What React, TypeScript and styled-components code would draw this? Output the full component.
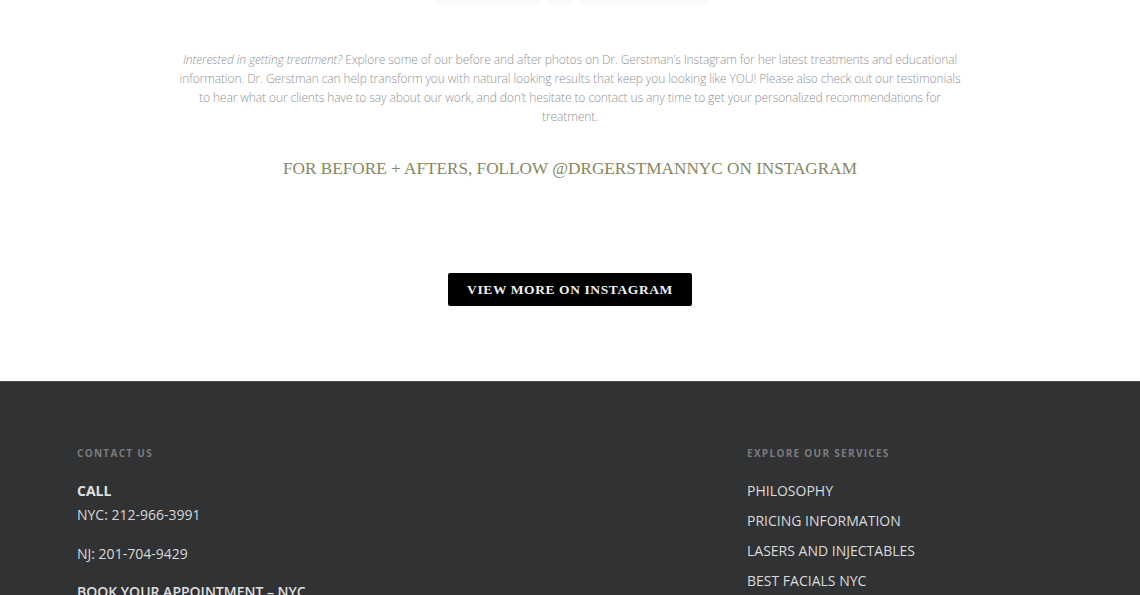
import React from "react";
import styled, { createGlobalStyle } from "styled-components";

const Global = createGlobalStyle`
  html, body { margin: 0; padding: 0; background: #fff; }
  body { font-family: "Open Sans", "Liberation Sans", sans-serif; overflow: hidden; }
  * { box-sizing: border-box; }
`;

const Page = styled.div`
  width: 1140px;
  height: 595px;
  overflow: hidden;
  display: flex;
  flex-direction: column;
`;

const TopStrip = styled.div`
  display: flex;
  flex-shrink: 0;
  justify-content: center;
  gap: 8px;
  height: 5px;
  padding-left: 1px;
`;

const Ghost = styled.div<{ $w: number }>`
  width: ${(p) => p.$w}px;
  height: 5px;
  background: #fafafa;
`;

const Intro = styled.section`
  display: flex;
  flex-shrink: 0;
  flex-direction: column;
  align-items: center;
  padding-top: 45px;
  height: 376px;
`;

const Para = styled.p`
  margin: 0;
  width: 790px;
  text-align: center;
  font-family: "Open Sans", sans-serif;
  font-weight: 300;
  font-size: 12px;
  line-height: 19px;
  color: #939393;
  letter-spacing: -0.1px;
  em { font-style: italic; }
`;

const Follow = styled.h2`
  margin: 33px 0 0;
  font-family: "Liberation Serif", "DejaVu Serif", serif;
  font-weight: 400;
  font-size: 17.2px;
  letter-spacing: 0;
  color: #888760;
  text-transform: uppercase;
`;

const Button = styled.a`
  margin-top: 94px;
  width: 244px;
  height: 33px;
  display: flex;
  align-items: center;
  justify-content: center;
  background: #000;
  border-radius: 2px;
  color: #f1f1f1;
  font-family: "Liberation Serif", serif;
  font-weight: 700;
  font-size: 13.5px;
  letter-spacing: 0.6px;
  text-decoration: none;
`;

const Footer = styled.footer`
  flex: 1;
  background: #313234;
  border-top: 1px solid #4a4b4d;
  display: grid;
  grid-template-columns: 670px 1fr;
  padding: 64px 0 0 77px;
`;

const Col = styled.div`
  display: flex;
  flex-direction: column;
`;

const ColTitle = styled.h4`
  margin: 0 0 19px;
  font-family: "Open Sans", sans-serif;
  font-weight: 700;
  font-size: 10px;
  letter-spacing: 1.3px;
  color: #7c7c7e;
  line-height: 14px;
`;

const Label = styled.div`
  font-family: "Open Sans", sans-serif;
  font-weight: 700;
  font-size: 14px;
  line-height: 24px;
  color: #e0e0e0;
`;

const Line = styled.div<{ $gap?: number }>`
  font-family: "Open Sans", sans-serif;
  font-size: 14px;
  line-height: 24px;
  color: #d8d8d8;
  margin-top: ${(p) => p.$gap ?? 0}px;
`;

const BookLine = styled(Label)`
  margin-top: 14px;
  font-weight: 600;
`;

const NavList = styled.nav`
  display: flex;
  flex-direction: column;
  margin-top: -3px;
`;

const NavLink = styled.a`
  font-family: "Open Sans", sans-serif;
  font-size: 14px;
  line-height: 30px;
  color: #dadada;
  text-decoration: none;
`;

export default function App() {
  return (
    <Page>
      <Global />
      <TopStrip>
        <Ghost $w={104} />
        <Ghost $w={24} />
        <Ghost $w={128} />
      </TopStrip>
      <Intro>
        <Para>
          <em>Interested in getting treatment?</em> Explore some of our before and after photos on Dr. Gerstman’s Instagram for her latest treatments and educational information. Dr. Gerstman can help transform you with natural looking results that keep you looking like YOU! Please also check out our testimonials to hear what our clients have to say about our work, and don’t hesitate to contact us any time to get your personalized recommendations for treatment.
        </Para>
        <Follow>For before + afters, follow @drgerstmannyc on Instagram</Follow>
        <Button href="#">VIEW MORE ON INSTAGRAM</Button>
      </Intro>
      <Footer>
        <Col>
          <ColTitle>CONTACT US</ColTitle>
          <Label>CALL</Label>
          <Line>NYC: 212-966-3991</Line>
          <Line $gap={15}>NJ: 201-704-9429</Line>
          <BookLine>BOOK YOUR APPOINTMENT – NYC</BookLine>
        </Col>
        <Col>
          <ColTitle>EXPLORE OUR SERVICES</ColTitle>
          <NavList>
            <NavLink href="#">PHILOSOPHY</NavLink>
            <NavLink href="#">PRICING INFORMATION</NavLink>
            <NavLink href="#">LASERS AND INJECTABLES</NavLink>
            <NavLink href="#">BEST FACIALS NYC</NavLink>
          </NavList>
        </Col>
      </Footer>
    </Page>
  );
}
